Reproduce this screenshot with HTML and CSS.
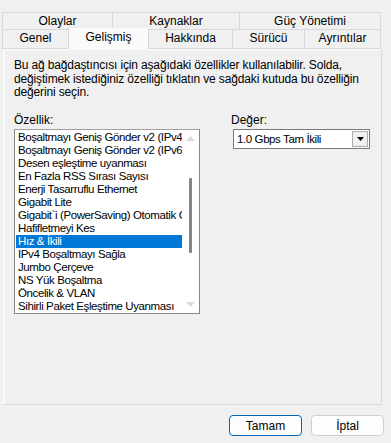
FILE: index.html
```html
<!DOCTYPE html>
<html lang="tr">
<head>
  <meta charset="UTF-8">
  <title>Özellikler</title>
  <link rel="stylesheet" href="styles.css">
</head>
<body>

  <div class="dialog">

    <!-- Tabs, two rows -->
    <div class="tabs">
      <div class="tab-row">
        <div class="tab" style="width:110px">Olaylar</div>
        <div class="tab" style="width:127px">Kaynaklar</div>
        <div class="tab" style="width:142px">Güç Yönetimi</div>
      </div>
      <div class="tab-row">
        <div class="tab" style="width:66px">Genel</div>
        <div class="tab active" style="width:80px">Gelişmiş</div>
        <div class="tab" style="width:84px">Hakkında</div>
        <div class="tab" style="width:72px">Sürücü</div>
        <div class="tab" style="width:77px">Ayrıntılar</div>
      </div>
    </div>

    <div class="panel">
      <p class="intro">Bu ağ bağdaştıncısı için aşağıdaki özellikler kullanılabilir. Solda,<br>değiştimek istediğiniz özelliği tıklatın ve sağdaki kutuda bu özelliğin<br>değerini seçin.</p>

      <div class="columns">
        <div class="col-left">
          <label class="field-label">Özellik:</label>
          <div class="listbox">
            <ul class="items">
              <li>Boşaltmayı Geniş Gönder v2 (IPv4)</li>
              <li>Boşaltmayı Geniş Gönder v2 (IPv6)</li>
              <li>Desen eşleştime uyanması</li>
              <li>En Fazla RSS Sırası Sayısı</li>
              <li>Enerji Tasarruflu Ethernet</li>
              <li>Gigabit Lite</li>
              <li>Gigabit`i (PowerSaving) Otomatik Geçiş</li>
              <li>Hafifletmeyi Kes</li>
              <li class="selected">Hız &amp; İkili</li>
              <li>IPv4 Boşaltmayı Sağla</li>
              <li>Jumbo Çerçeve</li>
              <li>NS Yük Boşaltma</li>
              <li>Öncelik &amp; VLAN</li>
              <li>Sihirli Paket Eşleştime Uyanması</li>
            </ul>
            <div class="scrollbar">
              <svg class="arrow" width="9" height="5" viewBox="0 0 9 5"><path d="M0 5 L4.5 0 L9 5 Z" fill="#dadada"/></svg>
              <div class="track"><div class="thumb"></div></div>
              <svg class="arrow" width="9" height="5" viewBox="0 0 9 5"><path d="M0 0 L4.5 5 L9 0 Z" fill="#dadada"/></svg>
            </div>
          </div>
        </div>

        <div class="col-right">
          <label class="field-label">Değer:</label>
          <div class="combo">
            <span class="combo-value">1.0 Gbps Tam İkili</span>
            <span class="combo-btn">
              <svg width="7" height="4" viewBox="0 0 7 4"><path d="M0 0 L7 0 L3.5 4 Z" fill="#000"/></svg>
            </span>
          </div>
        </div>
      </div>
    </div>

    <div class="footer">
      <button class="btn primary">Tamam</button>
      <button class="btn">İptal</button>
    </div>

  </div>

</body>
</html>
```

FILE: styles.css
```css
* {
  box-sizing: border-box;
  margin: 0;
  padding: 0;
}

body {
  font-family: 'Liberation Sans', Arial, sans-serif;
  font-size: 12px;
  color: #000;
  background: #f0f0f0;
  width: 391px;
  height: 443px;
  overflow: hidden;
}

.dialog {
  padding: 12px 0 0 2px;
}

/* Tabs */
.tabs {
  position: relative;
  z-index: 1;
}

.tab-row {
  display: flex;
  height: 18px;
}

.tab-row + .tab-row {
  height: 19px;
}

.tab {
  border: 1px solid #d9d9d9;
  border-right: none;
  background: #f0f0f0;
  text-align: center;
  line-height: 17px;
  font-size: 12px;
}

.tab-row .tab:last-child {
  border-right: 1px solid #d9d9d9;
}

.tab-row + .tab-row .tab {
  border-top: none;
}

.tab.active {
  background: #fafafa;
  margin-top: -2px;
  height: 21px;
  border-top: 1px solid #d9d9d9;
  border-bottom: none;
  line-height: 18px;
}

/* Panel */
.panel {
  margin-left: 1px;
  width: 379px;
  height: 356px;
  border: 1px solid #d9d9d9;
  border-top-color: #fafafa;
  border-left: 2px solid #f9f9f9;
  background: #f0f0f0;
  padding: 9px 4px 0 9px;
}

.intro {
  line-height: 13.5px;
  letter-spacing: -0.15px;
  white-space: nowrap;
}

.columns {
  display: flex;
  margin-top: 14px;
}

.col-left {
  width: 186px;
}

.col-right {
  margin-left: 31px;
}

.field-label {
  display: block;
  line-height: 13px;
  margin-bottom: 2px;
}

/* List box */
.listbox {
  display: flex;
  height: 185px;
  border: 1px solid #828790;
  border-top-color: #a0a0a0;
  background: #fff;
  padding: 1px;
}

.items {
  list-style: none;
  flex: 1;
  overflow: hidden;
  font-size: 11.5px;
  letter-spacing: -0.4px;
}

.items li {
  height: 13px;
  line-height: 13px;
  padding-left: 2px;
  white-space: nowrap;
  overflow: hidden;
}

.items li.selected {
  background: #0078d7;
  color: #fff;
}

.scrollbar {
  width: 16px;
  display: flex;
  flex-direction: column;
  align-items: center;
  padding: 5px 0;
}

.track {
  flex: 1;
  display: flex;
  justify-content: center;
  padding-top: 37px;
}

.thumb {
  width: 3px;
  height: 75px;
  background: #858585;
  border-radius: 1px;
}

/* Combo box */
.combo {
  display: flex;
  align-items: center;
  width: 137px;
  height: 20px;
  margin-left: 2px;
  border: 1px solid #7a7a7a;
  background: #fff;
  padding: 1px;
}

.combo-value {
  flex: 1;
  font-size: 11.5px;
  letter-spacing: -0.4px;
  padding-left: 2px;
}

.combo-btn {
  width: 16px;
  height: 16px;
  border: 1px solid #adadad;
  background: #f0f0f0;
  display: flex;
  align-items: center;
  justify-content: center;
}

/* Buttons */
.footer {
  display: flex;
  justify-content: flex-end;
  gap: 9px;
  padding: 10px 7px 0 0;
}

.btn {
  width: 73px;
  height: 21px;
  font-family: inherit;
  font-size: 12px;
  background: #fdfdfd;
  border: 1px solid #d0d0d0;
  border-radius: 4px;
}

.btn.primary {
  border-color: #0067c0;
}
```
